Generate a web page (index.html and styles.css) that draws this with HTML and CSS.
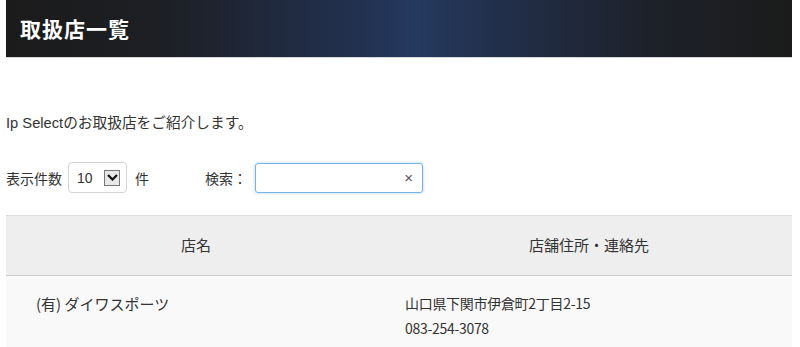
FILE: index.html
```html
<!DOCTYPE html>
<html lang="ja">
<head>
    <meta charset="UTF-8">
    <title>取扱店一覧</title>
    <link rel="stylesheet" href="styles.css">
</head>
<body>
    <div class="page">
        <div class="page-title">
            <h1>取扱店一覧</h1>
        </div>

        <p class="lead">Ip Selectのお取扱店をご紹介します。</p>

        <!-- 表示件数 / 検索 -->
        <div class="controls">
            <div class="length">
                <span>表示件数</span>
                <div class="select">
                    <span class="select-value">10</span>
                    <span class="select-arrow">
                        <svg width="11" height="7" viewBox="0 0 11 7"><path d="M1 1 L5.5 5.5 L10 1" fill="none" stroke="#111" stroke-width="2.2"/></svg>
                    </span>
                </div>
                <span>件</span>
            </div>
            <div class="search">
                <span>検索：</span>
                <div class="search-box">
                    <span class="clear">×</span>
                </div>
            </div>
        </div>

        <!-- 取扱店テーブル -->
        <table class="shops">
            <thead>
                <tr>
                    <th class="col-name">店名</th>
                    <th>店舗住所・連絡先</th>
                </tr>
            </thead>
            <tbody>
                <tr>
                    <td class="name">(有) ダイワスポーツ</td>
                    <td class="addr">山口県下関市伊倉町2丁目2-15<br>083-254-3078</td>
                </tr>
            </tbody>
        </table>
    </div>
</body>
</html>
```

FILE: styles.css
```css
body {
    margin: 0;
    padding: 0;
    background: #fff;
    color: #333;
    font-family: "Liberation Sans", "Noto Sans CJK JP", sans-serif;
    font-size: 14px;
}
.page {
    margin: 0 8px 0 6px;
}
.page-title {
    height: 57px;
    background: linear-gradient(to right, #1b1b1b 0%, #1d1f24 20%, #223150 45%, #243a5f 52%, #22304c 62%, #1d2129 82%, #1b1b1b 100%);
    border-bottom: 1px solid #d6d6d6;
    display: flex;
    align-items: center;
}
h1 {
    margin: 0 0 2px 14px;
    color: #fff;
    font-family: "Noto Sans CJK JP", sans-serif;
    font-size: 21px;
    font-weight: bold;
    letter-spacing: 1px;
}
.lead {
    margin: 56px 0 0;
    line-height: 18px;
    font-size: 14.7px;
}
.controls {
    display: flex;
    align-items: center;
    gap: 56px;
    margin-top: 30px;
    height: 31px;
}
.length, .search {
    display: flex;
    align-items: center;
    font-size: 14px;
}
.length span:first-child {
    margin-right: 6px;
}
.select {
    box-sizing: border-box;
    width: 59px;
    height: 31px;
    padding: 0 6px 0 8px;
    border: 1px solid #d4d4d4;
    border-radius: 4px;
    display: flex;
    align-items: center;
    justify-content: space-between;
    margin-right: 8px;
}
.select-value {
    font-size: 14px;
}
.select-arrow {
    width: 14px;
    height: 14px;
    border: 1px solid #777;
    background: #e8e8e8;
    display: flex;
    align-items: center;
    justify-content: center;
}
.search-box {
    width: 166px;
    height: 28px;
    margin-left: 8px;
    border: 1px solid #7ab2ea;
    border-radius: 3px;
    box-shadow: 0 0 3px rgba(102, 175, 233, 0.6);
    display: flex;
    align-items: center;
    justify-content: flex-end;
}
.clear {
    margin-right: 9px;
    color: #555;
    font-size: 15px;
}
.shops {
    width: 100%;
    border-collapse: collapse;
    margin-top: 22px;
    font-family: "Noto Sans CJK JP", sans-serif;
    font-size: 14px;
}
.shops th {
    height: 56px;
    padding: 0 0 3px;
    background: #eee;
    border-top: 1px solid #ddd;
    border-bottom: 1px solid #ccc;
    font-size: 15px;
    font-weight: normal;
    text-align: center;
}
.shops th.col-name {
    width: 380px;
}
.shops td {
    background: #f9f9f9;
    vertical-align: top;
    padding: 15px 0;
    line-height: 25px;
}
.shops td.name {
    padding-left: 30px;
    font-size: 15px;
}
.shops td.addr {
    padding-left: 19px;
    letter-spacing: -0.3px;
}
```
